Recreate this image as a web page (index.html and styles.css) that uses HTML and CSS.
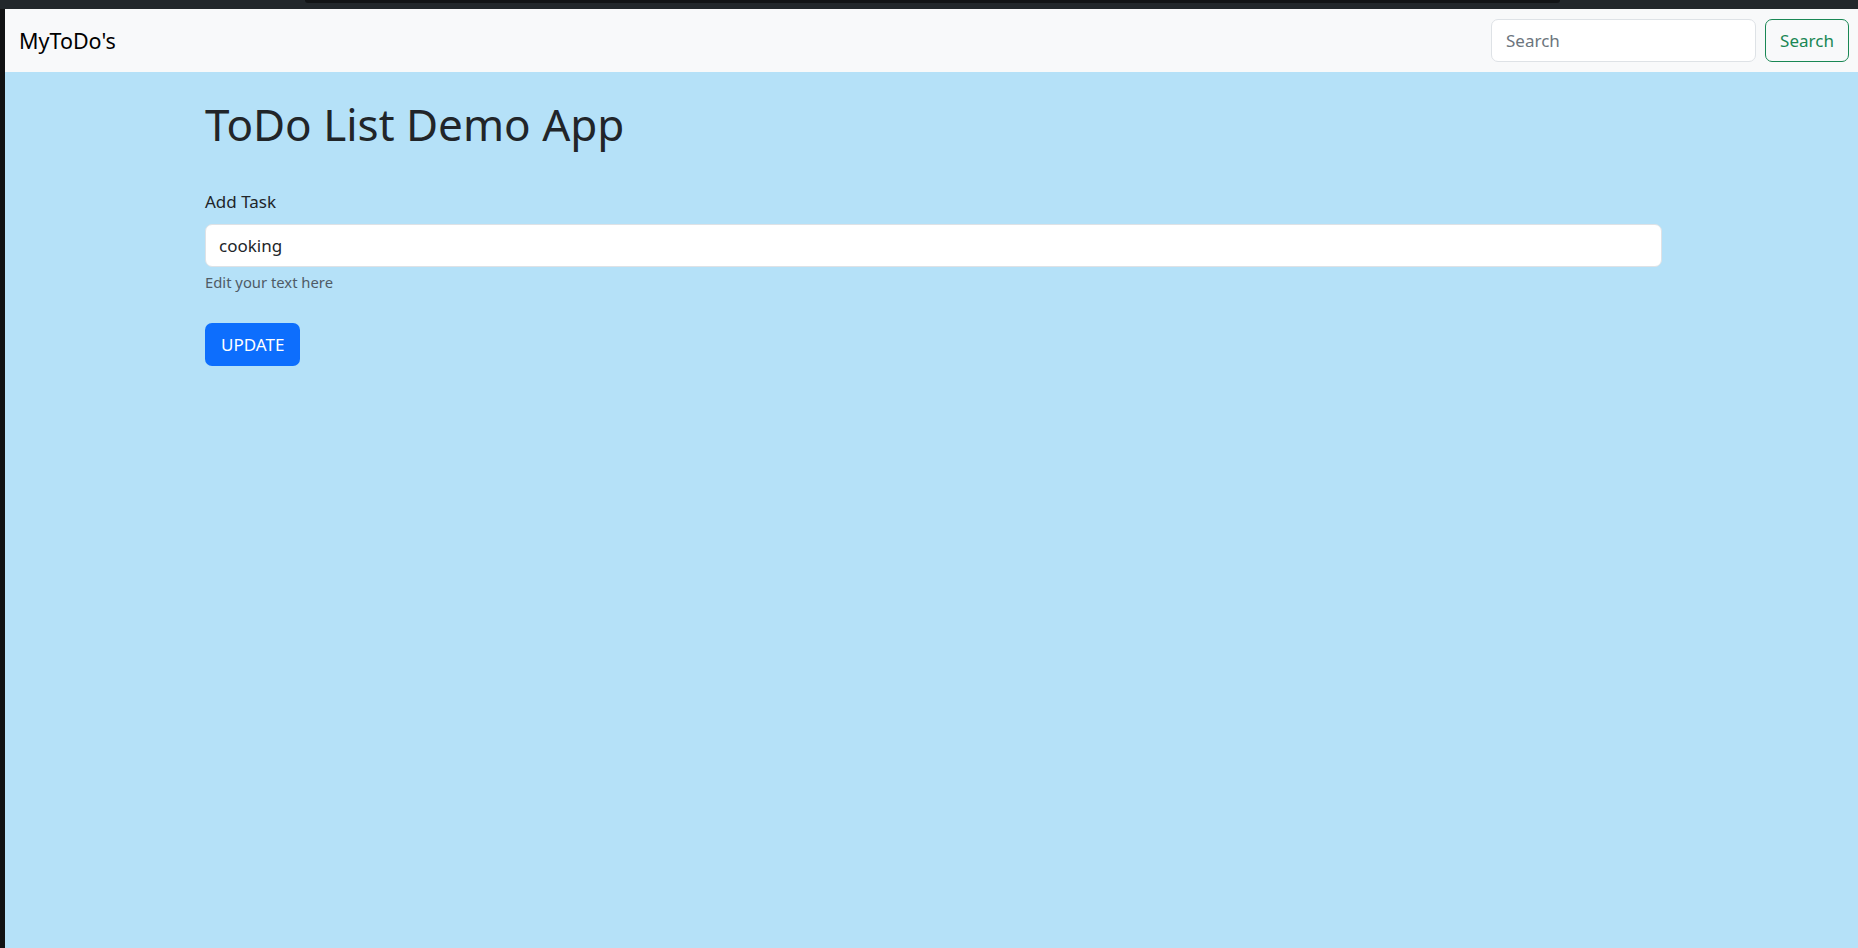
FILE: index.html
```html
<!DOCTYPE html>
<html lang="en">
<head>
<meta charset="utf-8">
<title>MyToDo's</title>
<link rel="stylesheet" href="styles.css">
</head>
<body>
<div class="window">
  <div class="topbar"><div class="tab"></div></div>
  <div class="page">
    <nav class="navbar">
      <a class="brand" href="#">MyToDo's</a>
      <form class="search">
        <input class="search-input" type="search" placeholder="Search">
        <button class="btn-outline" type="button">Search</button>
      </form>
    </nav>
    <main class="container">
      <h1 class="title">ToDo List Demo App</h1>
      <form class="task-form">
        <label class="label" for="task">Add Task</label>
        <input class="task-input" id="task" type="text" value="cooking">
        <div class="help">Edit your text here</div>
        <button class="btn-primary" type="button">UPDATE</button>
      </form>
    </main>
  </div>
</div>
</body>
</html>
```
FILE: styles.css
```css
* { box-sizing: border-box; }
html, body { margin: 0; height: 100%; }
body {
  font-family: "Noto Sans", "Open Sans", sans-serif;
  color: #212529;
  background: #111213;
}
.window {
  height: 100%;
  display: flex;
  flex-direction: column;
  padding-left: 5px;
}
.topbar {
  height: 9px;
  background: #22272b;
  margin-left: -5px;
  position: relative;
}
.tab {
  position: absolute;
  left: 305px;
  width: 1255px;
  top: 0;
  height: 3px;
  background: #121416;
  border-radius: 0 0 6px 6px;
}
.page {
  flex: 1;
  background: #b5e1f8;
  display: flex;
  flex-direction: column;
}
.navbar {
  height: 63px;
  background: #f8f9fa;
  display: flex;
  align-items: center;
  justify-content: space-between;
  padding: 0 9px 0 14px;
}
.brand {
  font-size: 21.5px;
  color: #000;
  text-decoration: none;
}
.search {
  display: flex;
  gap: 9px;
  margin: 0;
}
.search-input {
  width: 265px;
  height: 43px;
  border: 1px solid #dee2e6;
  border-radius: 7px;
  padding: 0 14px;
  font: inherit;
  font-size: 17px;
  background: #fff;
  color: #212529;
}
.search-input::placeholder { color: #6c757d; }
.btn-outline {
  width: 84px;
  height: 43px;
  border: 1px solid #198754;
  border-radius: 7px;
  background: transparent;
  color: #198754;
  font: inherit;
  font-size: 17px;
  padding: 0;
}
.container {
  width: 1457px;
  margin: 0 auto 0 200px;
  padding-top: 26px;
}
.title {
  font-size: 44px;
  font-weight: 400;
  line-height: 1.2;
  margin: 0 0 39px;
}
.task-form {
  display: flex;
  flex-direction: column;
  align-items: flex-start;
}
.label {
  font-size: 17px;
  margin-bottom: 11px;
}
.task-input {
  width: 100%;
  height: 43px;
  border: 1px solid #dee2e6;
  border-radius: 7px;
  background: #fff;
  padding: 0 13px;
  font: inherit;
  font-size: 17px;
  color: #212529;
}
.help {
  font-size: 14.8px;
  color: #4f5b66;
  margin-top: 5px;
}
.btn-primary {
  margin-top: 31px;
  height: 43px;
  padding: 0 16px;
  border: 0;
  border-radius: 7px;
  background: #0d6efd;
  color: #fff;
  font: inherit;
  font-size: 17px;
}
```
